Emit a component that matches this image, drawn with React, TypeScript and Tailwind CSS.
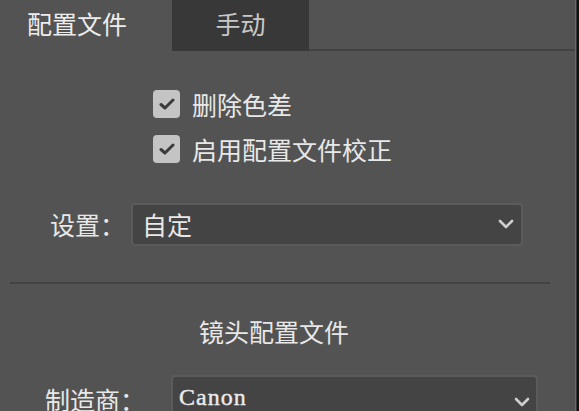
import React from "react";

const cjk = { fontFamily: '"Microsoft YaHei", "Noto Sans CJK SC", "Noto Sans", sans-serif' };

function Check() {
  return (
    <div className="w-[27px] h-[28px] rounded-[4px] bg-[#c4c4c4] flex items-center justify-center">
      <svg width="16" height="12" viewBox="0 0 16 12">
        <path d="M2 6.5 L6 10 L14 2" fill="none" stroke="#3b3b3b" strokeWidth="3" strokeLinecap="round" strokeLinejoin="round" />
      </svg>
    </div>
  );
}

function Chevron() {
  return (
    <svg width="16" height="11" viewBox="0 0 16 11">
      <path d="M2 2 L8 8 L14 2" fill="none" stroke="#cfcfcf" strokeWidth="2.6" strokeLinecap="round" strokeLinejoin="round" />
    </svg>
  );
}

export default function App() {
  return (
    <div className="w-[579px] h-[411px] overflow-hidden flex bg-[#111]" style={cjk}>
      <div className="w-[575px] h-full bg-[#535353] flex flex-col text-[#e8e8e8]">
        {/* tabs */}
        <div className="flex h-[51px] shrink-0">
          <div className="w-[172px] h-full flex items-center pl-[27px] pb-[5px] text-[25px] leading-none text-[#ededed]">
            配置文件
          </div>
          <div className="w-[137px] h-full bg-[#383838] flex items-center justify-center pb-[5px] text-[25px] leading-none text-[#c9c9c9]">
            手动
          </div>
          <div className="flex-1 h-full border-b-2 border-[#424242]" />
        </div>

        {/* checkboxes */}
        <div className="shrink-0 flex flex-col pl-[153px] mt-[39px] gap-[17px]">
          <div className="flex items-center gap-[12px]">
            <Check />
            <span className="text-[25px] leading-none">删除色差</span>
          </div>
          <div className="flex items-center gap-[12px]">
            <Check />
            <span className="text-[25px] leading-none">启用配置文件校正</span>
          </div>
        </div>

        {/* setting select */}
        <div className="shrink-0 flex items-center mt-[40px] pl-[50px]">
          <span className="w-[81px] text-[25px] leading-none">设置：</span>
          <div className="w-[392px] h-[43px] rounded-[4px] border-2 border-[#5b5b5b] bg-[#444444] flex items-center justify-between pl-[9px] pr-[7px]">
            <span className="text-[25px] leading-none">自定</span>
            <Chevron />
          </div>
        </div>

        {/* divider */}
        <div className="shrink-0 ml-[10px] w-[540px] h-[2px] bg-[#424242] mt-[36px]" />

        {/* heading */}
        <div className="shrink-0 pl-[199px] mt-[35px] text-[25px] leading-none">镜头配置文件</div>

        {/* maker select */}
        <div className="shrink-0 flex items-start mt-[31px] pl-[45px]">
          <span className="w-[126px] text-[25px] leading-none mt-[12px]">制造商：</span>
          <div className="w-[367px] h-[50px] rounded-t-[4px] border-2 border-b-0 border-[#5b5b5b] bg-[#444444] flex items-start justify-between pl-[6px] pr-[6px] pt-[8px]">
            <span
              className="text-[24px] leading-none tracking-[1px] text-[#ececec]"
              style={{ fontFamily: '"Liberation Serif", "DejaVu Serif", serif', WebkitTextStroke: "0.4px #ececec" }}
            >
              Canon
            </span>
            <div className="mt-[12px]">
              <Chevron />
            </div>
          </div>
        </div>
      </div>
      <div className="w-px h-full bg-[#686868]" />
      <div className="w-px h-full bg-[#383838]" />
    </div>
  );
}
